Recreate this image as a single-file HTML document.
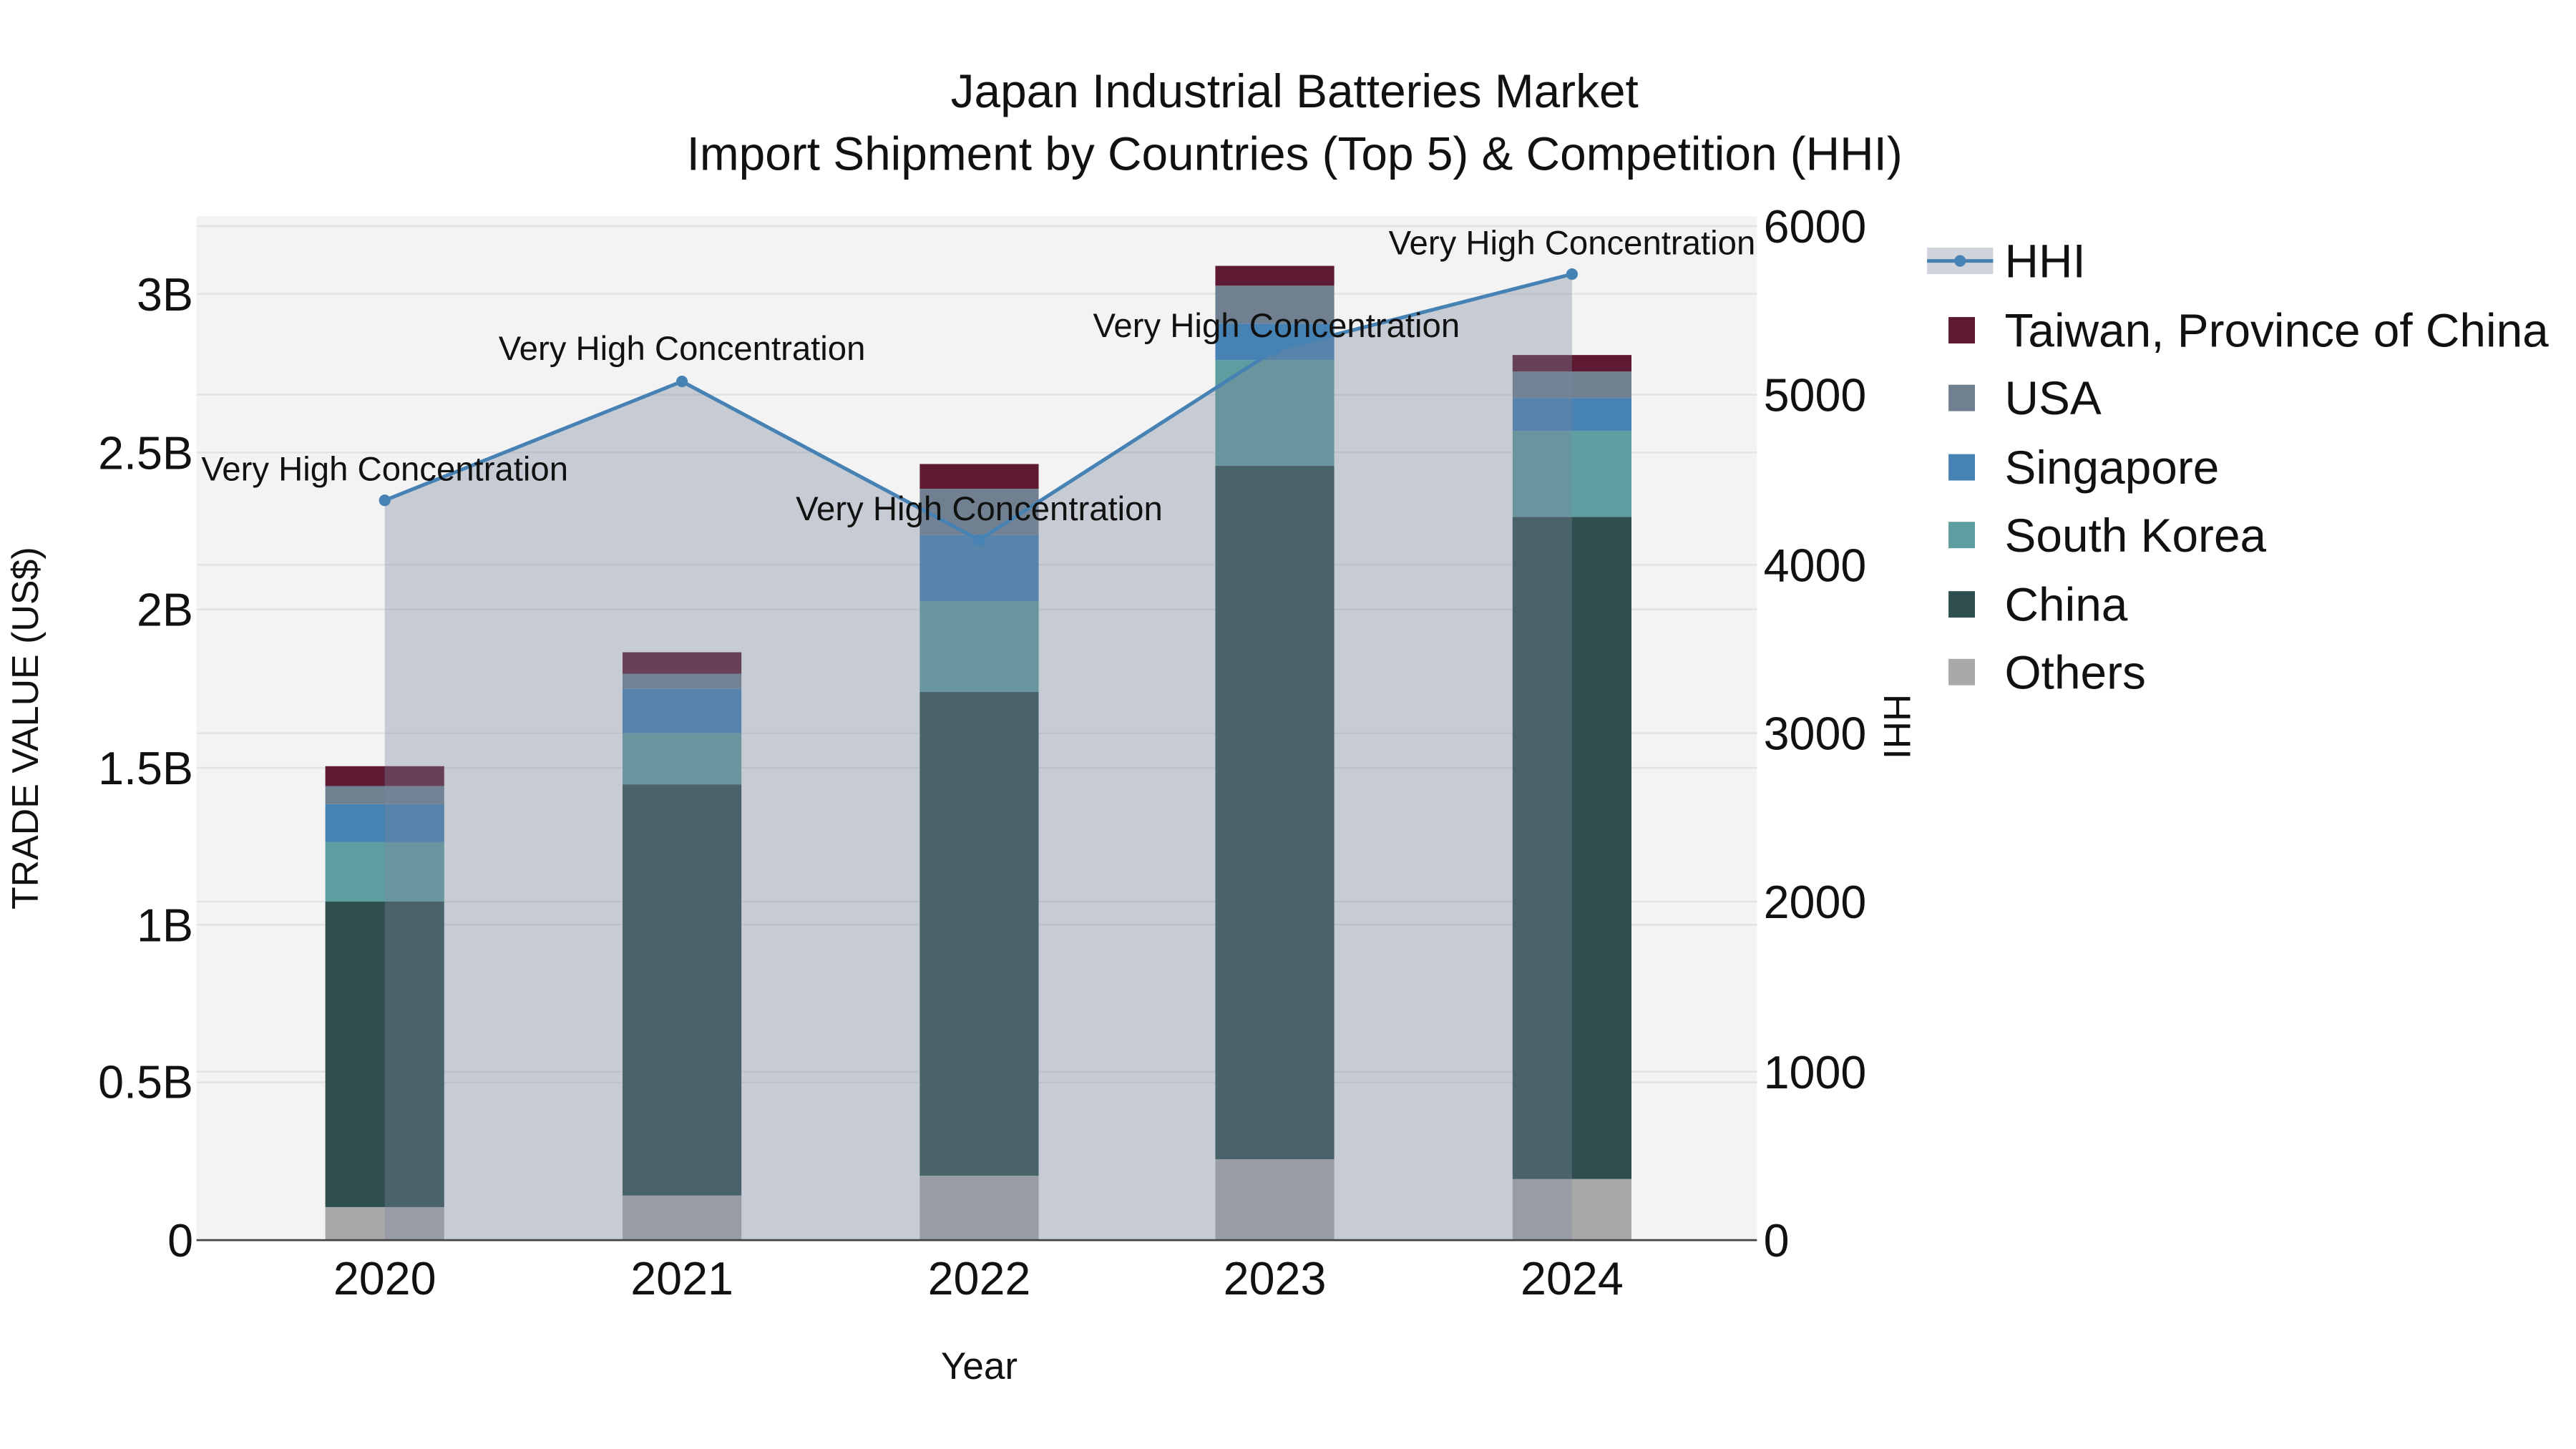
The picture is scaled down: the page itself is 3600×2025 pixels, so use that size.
<!DOCTYPE html>
<html><head><meta charset="utf-8"><style>html,body{margin:0;padding:0;background:#fff}svg{display:block}text{font-family:"Liberation Sans",Arial,sans-serif}</style></head>
<body>
<svg width="3600" height="2025" viewBox="0 0 1560 877.5" xmlns="http://www.w3.org/2000/svg">
<rect width="1560" height="878" fill="#fff"/>
<rect x="119" y="131" width="945" height="620" fill="#f3f3f3"/>
<g stroke="#e2e2e2" stroke-width="1">
<line x1="119" x2="1064" y1="655.5" y2="655.5"/><line x1="119" x2="1064" y1="560" y2="560"/><line x1="119" x2="1064" y1="465" y2="465"/><line x1="119" x2="1064" y1="369" y2="369"/><line x1="119" x2="1064" y1="274" y2="274"/><line x1="119" x2="1064" y1="178" y2="178"/>
<line x1="119" x2="1064" y1="649" y2="649"/><line x1="119" x2="1064" y1="546" y2="546"/><line x1="119" x2="1064" y1="444" y2="444"/><line x1="119" x2="1064" y1="342" y2="342"/><line x1="119" x2="1064" y1="239" y2="239"/><line x1="119" x2="1064" y1="137" y2="137"/>
</g>
<g>
<rect x="197" y="731" width="72" height="20" fill="#a9a9a9"/><rect x="197" y="546" width="72" height="185" fill="#2f4f4f"/><rect x="197" y="510" width="72" height="36" fill="#5f9ea0"/><rect x="197" y="487" width="72" height="23" fill="#4682b4"/><rect x="197" y="476" width="72" height="11" fill="#708090"/><rect x="197" y="464" width="72" height="12" fill="#5e1a33"/>
<rect x="377" y="724" width="72" height="27" fill="#a9a9a9"/><rect x="377" y="475" width="72" height="249" fill="#2f4f4f"/><rect x="377" y="444" width="72" height="31" fill="#5f9ea0"/><rect x="377" y="417" width="72" height="27" fill="#4682b4"/><rect x="377" y="408" width="72" height="9" fill="#708090"/><rect x="377" y="395" width="72" height="13" fill="#5e1a33"/>
<rect x="557" y="712" width="72" height="39" fill="#a9a9a9"/><rect x="557" y="419" width="72" height="293" fill="#2f4f4f"/><rect x="557" y="364" width="72" height="55" fill="#5f9ea0"/><rect x="557" y="324" width="72" height="40" fill="#4682b4"/><rect x="557" y="296" width="72" height="28" fill="#708090"/><rect x="557" y="281" width="72" height="15" fill="#5e1a33"/>
<rect x="736" y="702" width="72" height="49" fill="#a9a9a9"/><rect x="736" y="282" width="72" height="420" fill="#2f4f4f"/><rect x="736" y="218" width="72" height="64" fill="#5f9ea0"/><rect x="736" y="196" width="72" height="22" fill="#4682b4"/><rect x="736" y="173" width="72" height="23" fill="#708090"/><rect x="736" y="161" width="72" height="12" fill="#5e1a33"/>
<rect x="916" y="714" width="72" height="37" fill="#a9a9a9"/><rect x="916" y="313" width="72" height="401" fill="#2f4f4f"/><rect x="916" y="261" width="72" height="52" fill="#5f9ea0"/><rect x="916" y="241" width="72" height="20" fill="#4682b4"/><rect x="916" y="225" width="72" height="16" fill="#708090"/><rect x="916" y="215" width="72" height="10" fill="#5e1a33"/>
</g>
<polygon points="233,751 233,303 413,231 593,327 772,212 952,166 952,751" fill="rgb(122,133,155)" fill-opacity="0.36"/>
<polyline points="233,303 413,231 593,327 772,212 952,166" fill="none" stroke="#4682b4" stroke-width="2.2"/>
<g fill="#4682b4"><circle cx="233" cy="303" r="3.5"/><circle cx="413" cy="231" r="3.5"/><circle cx="593" cy="327" r="3.5"/><circle cx="772" cy="212" r="3.5"/><circle cx="952" cy="166" r="3.5"/></g>
<line x1="119" x2="1064" y1="751" y2="751" stroke="#444" stroke-width="1.2"/>
<g font-size="20.5" fill="#111" text-anchor="middle">
<text x="233" y="291">Very High Concentration</text><text x="413" y="218">Very High Concentration</text><text x="593" y="315">Very High Concentration</text><text x="773" y="204">Very High Concentration</text><text x="952" y="154">Very High Concentration</text>
</g>
<g font-size="28" fill="#111" text-anchor="end">
<text x="117" y="761">0</text><text x="117" y="665">0.5B</text><text x="117" y="570">1B</text><text x="117" y="475">1.5B</text><text x="117" y="379">2B</text><text x="117" y="284">2.5B</text><text x="117" y="188">3B</text>
</g>
<g font-size="28" fill="#111" text-anchor="start">
<text x="1068" y="761">0</text><text x="1068" y="659">1000</text><text x="1068" y="556">2000</text><text x="1068" y="454">3000</text><text x="1068" y="352">4000</text><text x="1068" y="249">5000</text><text x="1068" y="147">6000</text>
</g>
<g font-size="28" fill="#111" text-anchor="middle">
<text x="233" y="784">2020</text><text x="413" y="784">2021</text><text x="593" y="784">2022</text><text x="772" y="784">2023</text><text x="952" y="784">2024</text>
</g>
<text x="593" y="835" font-size="23" fill="#111" text-anchor="middle">Year</text>
<text transform="translate(23,441) rotate(-90)" font-size="22.5" fill="#111" text-anchor="middle">TRADE VALUE (US$)</text>
<text transform="translate(1141,440) rotate(90)" font-size="23" fill="#111" text-anchor="middle">HHI</text>
<g font-size="28.5" fill="#111" text-anchor="middle">
<text x="784" y="65">Japan Industrial Batteries Market</text>
<text x="784" y="103">Import Shipment by Countries (Top 5) &amp; Competition (HHI)</text>
</g>
<rect x="1167" y="150" width="40" height="16" fill="rgb(122,133,155)" fill-opacity="0.36"/>
<line x1="1167" x2="1207" y1="158" y2="158" stroke="#4682b4" stroke-width="2.2"/><circle cx="1187" cy="158" r="3.5" fill="#4682b4"/>
<rect x="1180" y="192" width="16" height="16" fill="#5e1a33"/>
<rect x="1180" y="233" width="16" height="16" fill="#708090"/>
<rect x="1180" y="275" width="16" height="16" fill="#4682b4"/>
<rect x="1180" y="316" width="16" height="16" fill="#5f9ea0"/>
<rect x="1180" y="358" width="16" height="16" fill="#2f4f4f"/>
<rect x="1180" y="399" width="16" height="16" fill="#a9a9a9"/>
<g font-size="28.5" fill="#111">
<text x="1214" y="168">HHI</text><text x="1214" y="210">Taiwan, Province of China</text><text x="1214" y="251">USA</text><text x="1214" y="293">Singapore</text><text x="1214" y="334">South Korea</text><text x="1214" y="376">China</text><text x="1214" y="417">Others</text>
</g>
</svg>
</body></html>
